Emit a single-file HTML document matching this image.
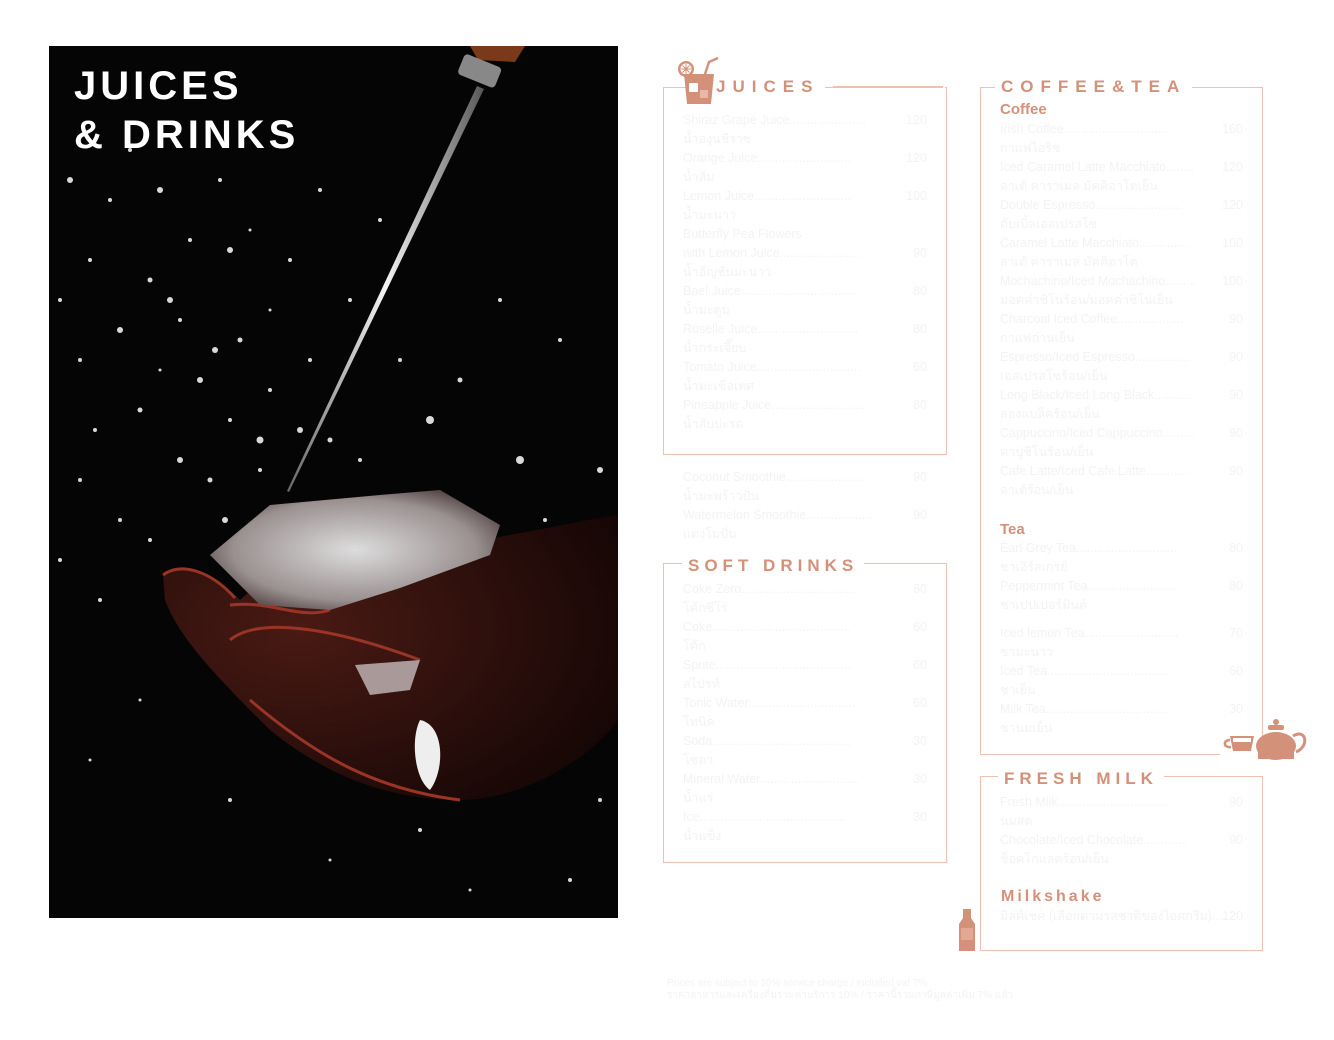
<!DOCTYPE html>
<html><head><meta charset="utf-8"><style>
*{margin:0;padding:0;box-sizing:border-box}
body{width:1334px;height:1040px;background:#fff;position:relative;overflow:hidden;font-family:"Liberation Sans","Noto Sans CJK SC",sans-serif}
.box{position:absolute;border:1.5px solid #ebc2b2}
.h{position:absolute;background:#fff;color:#d4917a;font-weight:bold;font-size:17px;letter-spacing:5px;padding:0 6px;line-height:20px}
.sub{position:absolute;color:#d4917a;font-weight:bold;font-size:15px}
.l{position:absolute;font-size:12.5px;color:#f3f3f3;line-height:19px;white-space:nowrap}
.p{position:absolute;font-size:12.5px;color:#f3f3f3;line-height:19px;text-align:right;width:40px}
</style></head><body>

<svg style="position:absolute;left:49px;top:46px" width="569" height="872" viewBox="49 46 569 872">
<defs>
<radialGradient id="ice" cx="0.5" cy="0.5" r="0.6"><stop offset="0" stop-color="#ddd"/><stop offset="0.7" stop-color="#9a9090"/><stop offset="1" stop-color="#4a3a3a"/></radialGradient>
<linearGradient id="pick" x1="0" y1="0" x2="1" y2="0"><stop offset="0" stop-color="#666"/><stop offset="0.5" stop-color="#f4f4f4"/><stop offset="1" stop-color="#555"/></linearGradient>
<radialGradient id="hand" cx="0.3" cy="0.4" r="0.8"><stop offset="0" stop-color="#4a1a14"/><stop offset="1" stop-color="#140605"/></radialGradient>
</defs>
<rect x="49" y="46" width="569" height="872" fill="#050505"/>
<g fill="#fff" opacity="0.85">
<circle cx="70" cy="180" r="3"/><circle cx="110" cy="200" r="2"/><circle cx="160" cy="190" r="3"/><circle cx="220" cy="180" r="2"/><circle cx="90" cy="260" r="2"/><circle cx="150" cy="280" r="2.5"/><circle cx="230" cy="250" r="3"/><circle cx="290" cy="260" r="2"/><circle cx="120" cy="330" r="3"/><circle cx="180" cy="320" r="2"/><circle cx="240" cy="340" r="2.5"/><circle cx="80" cy="360" r="2"/><circle cx="200" cy="380" r="3"/><circle cx="270" cy="390" r="2"/><circle cx="140" cy="410" r="2.5"/><circle cx="230" cy="420" r="2"/><circle cx="300" cy="430" r="3"/><circle cx="95" cy="430" r="2"/><circle cx="180" cy="460" r="3"/><circle cx="260" cy="470" r="2"/><circle cx="330" cy="440" r="2.5"/><circle cx="360" cy="460" r="2"/><circle cx="430" cy="420" r="4"/><circle cx="520" cy="460" r="4"/><circle cx="560" cy="340" r="2"/><circle cx="500" cy="300" r="2"/><circle cx="400" cy="360" r="2"/><circle cx="460" cy="380" r="2.5"/><circle cx="350" cy="300" r="2"/><circle cx="320" cy="190" r="2"/><circle cx="380" cy="220" r="2"/><circle cx="600" cy="470" r="3"/><circle cx="580" cy="560" r="3"/><circle cx="545" cy="520" r="2"/><circle cx="80" cy="480" r="2"/><circle cx="120" cy="520" r="2"/><circle cx="60" cy="560" r="2"/><circle cx="100" cy="600" r="2"/><circle cx="140" cy="700" r="1.5"/><circle cx="90" cy="760" r="1.5"/><circle cx="230" cy="800" r="2"/><circle cx="330" cy="860" r="1.5"/><circle cx="420" cy="830" r="2"/><circle cx="520" cy="760" r="2"/><circle cx="570" cy="880" r="2"/><circle cx="470" cy="890" r="1.5"/><circle cx="600" cy="720" r="2"/><circle cx="250" cy="230" r="1.5"/><circle cx="190" cy="240" r="2"/><circle cx="130" cy="150" r="2"/><circle cx="60" cy="300" r="2"/><circle cx="270" cy="310" r="1.5"/><circle cx="310" cy="360" r="2"/><circle cx="160" cy="370" r="1.5"/><circle cx="210" cy="480" r="2.5"/>
<circle cx="170" cy="300" r="3"/><circle cx="215" cy="350" r="3"/><circle cx="260" cy="440" r="3.5"/><circle cx="225" cy="520" r="3"/><circle cx="150" cy="540" r="2"/><circle cx="330" cy="520" r="3"/><circle cx="520" cy="680" r="3"/><circle cx="560" cy="640" r="2"/><circle cx="480" cy="560" r="3"/><circle cx="600" cy="800" r="2"/><circle cx="250" cy="560" r="2"/></g>
<path d="M163 575 C180 560 215 575 240 600 C270 570 330 555 420 548 C500 540 580 520 618 515 L618 720 C590 760 520 800 460 800 C380 800 320 770 270 730 C220 680 180 640 165 600 Z" fill="url(#hand)"/>
<path d="M163 575 C180 562 210 570 235 598 M230 640 C260 615 340 630 420 660 M230 605 C270 600 300 620 330 610 M250 700 C320 760 380 790 460 800" stroke="#9a3424" stroke-width="3" fill="none"/>
<path d="M210 555 L270 505 L380 495 L440 490 L500 525 L490 555 L400 588 L330 610 L260 605 Z" fill="url(#ice)"/>
<path d="M355 665 L420 660 L410 690 L370 695 Z" fill="#a99"/>
<path d="M420 720 C445 725 445 770 430 790 C415 780 410 740 420 720 Z" fill="#eee"/>
<path d="M470 46 L525 46 L515 62 L478 60 Z" fill="#7a3a1a"/>
<rect x="460" y="60" width="40" height="22" rx="4" fill="#888" transform="rotate(22 480 70)"/>
<path d="M477 86 L484 89 L289 492 L287 491 Z" fill="url(#pick)"/>
<text x="74" y="99" fill="#fff" font-family="Liberation Sans,sans-serif" font-weight="bold" font-size="40" letter-spacing="4">JUICES</text>
<text x="74" y="148" fill="#fff" font-family="Liberation Sans,sans-serif" font-weight="bold" font-size="40" letter-spacing="4">&amp; DRINKS</text>
</svg>

<!-- JUICES -->
<div class="box" style="left:663px;top:87px;width:284px;height:368px"></div>
<div class="h" style="left:710px;top:77px;letter-spacing:7px">JUICES</div>
<div style="position:absolute;left:833px;top:84px;width:112px;height:6px;background:#fff"></div>
<div style="position:absolute;left:833px;top:86px;width:110px;height:1.5px;background:#ebc2b2"></div>
<svg style="position:absolute;left:676px;top:57px" width="44" height="50" viewBox="0 0 44 50">
<circle cx="10" cy="12" r="8" fill="#d4917a"/><circle cx="10" cy="12" r="5.5" fill="#fff"/><path d="M10 7v10M5 12h10M6.5 8.5l7 7M13.5 8.5l-7 7" stroke="#d4917a" stroke-width="1"/>
<path d="M8 17 H38 L35 47 H11 Z" fill="#d4917a"/><rect x="13" y="26" width="9" height="9" rx="1" fill="#fff"/><rect x="24" y="33" width="8" height="8" fill="#e8b9a8"/>
<path d="M28 20 L33 5 L42 1" stroke="#d4917a" stroke-width="2.5" fill="none"/>
</svg>
<div class="l" style="left:683px;top:111px">Shiraz Grape Juice......................<br>น้ำองุ่นชีราซ<br>Orange Juice...........................<br>น้ำส้ม<br>Lemon Juice............................<br>น้ำมะนาว<br>Butterfly Pea Flowers<br>with Lemon Juice.......................<br>น้ำอัญชันมะนาว<br>Bael Juice.................................<br>น้ำมะตูม<br>Roselle Juice.............................<br>น้ำกระเจี๊ยบ<br>Tomato Juice..............................<br>น้ำมะเขือเทศ<br>Pineapple Juice...........................<br>น้ำสับปะรด</div>
<div class="p" style="left:887px;top:111px">120</div><div class="p" style="left:887px;top:149px">120</div><div class="p" style="left:887px;top:187px">100</div><div class="p" style="left:887px;top:244px">90</div><div class="p" style="left:887px;top:282px">80</div><div class="p" style="left:887px;top:320px">80</div><div class="p" style="left:887px;top:358px">60</div><div class="p" style="left:887px;top:396px">80</div>
<div class="l" style="left:683px;top:468px">Coconut Smoothie.......................<br>น้ำมะพร้าวปั่น<br>Watermelon Smoothie...................<br>แตงโมปั่น</div>
<div class="p" style="left:887px;top:468px">90</div><div class="p" style="left:887px;top:506px">90</div>

<!-- SOFT DRINKS -->
<div class="box" style="left:663px;top:563px;width:284px;height:300px"></div>
<div class="h" style="left:682px;top:556px">SOFT DRINKS</div>
<div class="l" style="left:683px;top:580px">Coke Zero.................................<br>โค้กซีโร่<br>Coke........................................<br>โค้ก<br>Sprite.......................................<br>สไปรท์<br>Tonic Water...............................<br>โทนิค<br>Soda........................................<br>โซดา<br>Mineral Water.............................<br>น้ำแร่<br>Ice..........................................<br>น้ำแข็ง</div>
<div class="p" style="left:887px;top:580px">60</div><div class="p" style="left:887px;top:618px">60</div><div class="p" style="left:887px;top:656px">60</div><div class="p" style="left:887px;top:694px">60</div><div class="p" style="left:887px;top:732px">30</div><div class="p" style="left:887px;top:770px">30</div><div class="p" style="left:887px;top:808px">30</div>

<!-- COFFEE & TEA -->
<div class="box" style="left:980px;top:87px;width:283px;height:668px"></div>
<div class="h" style="left:995px;top:77px;letter-spacing:7px">COFFEE&amp;TEA</div>
<div class="sub" style="left:1000px;top:101px">Coffee</div>
<div class="l" style="left:1000px;top:120px">Irish Coffee..............................<br>กาแฟไอริช<br>Iced Caramel Latte Macchiato........<br>ลาเต้ คาราเมล มัคคิอาโตเย็น<br>Double Espresso.........................<br>ดับเบิ้ลเอสเปรสโซ<br>Caramel Latte Macchiato..............<br>ลาเต้ คาราเมล มัคคิอาโต<br>Mochachino/Iced Mochachino.........<br>มอคค่าชิโน่ร้อน/มอคค่าชิโน่เย็น<br>Charcoal Iced Coffee...................<br>กาแฟถ่านเย็น<br>Espresso/Iced Espresso................<br>เอสเปรสโซร้อน/เย็น<br>Long Black/Iced Long Black...........<br>ลองแบล็คร้อน/เย็น<br>Cappuccino/Iced Cappuccino.........<br>คาปูชิโน่ร้อน/เย็น<br>Cafe Latte/Iced Cafe Latte............<br>ลาเต้ร้อน/เย็น</div>
<div class="p" style="left:1203px;top:120px">160</div><div class="p" style="left:1203px;top:158px">120</div><div class="p" style="left:1203px;top:196px">120</div><div class="p" style="left:1203px;top:234px">100</div><div class="p" style="left:1203px;top:272px">100</div><div class="p" style="left:1203px;top:310px">90</div><div class="p" style="left:1203px;top:348px">90</div><div class="p" style="left:1203px;top:386px">90</div><div class="p" style="left:1203px;top:424px">90</div><div class="p" style="left:1203px;top:462px">90</div>
<div class="sub" style="left:1000px;top:521px">Tea</div>
<div class="l" style="left:1000px;top:539px">Earl Grey Tea.............................<br>ชาเอิร์ลเกรย์<br>Peppermint Tea..........................<br>ชาเปปเปอร์มินต์</div>
<div class="p" style="left:1203px;top:539px">80</div><div class="p" style="left:1203px;top:577px">80</div>
<div class="l" style="left:1000px;top:624px">Iced lemon Tea...........................<br>ชามะนาว<br>Iced Tea...................................<br>ชาเย็น<br>Milk Tea...................................<br>ชานมเย็น</div>
<div class="p" style="left:1203px;top:624px">70</div><div class="p" style="left:1203px;top:662px">60</div><div class="p" style="left:1203px;top:700px">30</div>
<svg style="position:absolute;left:1220px;top:714px" width="88" height="48" viewBox="0 0 88 48">
<rect x="0" y="36" width="88" height="12" fill="#fff"/>
<path d="M10 22 H34 L31 37 H13 Z" fill="#d4917a"/><rect x="13" y="24" width="18" height="4" fill="#fff"/><path d="M10 26 C3 26 3 34 11 33" stroke="#d4917a" stroke-width="2.5" fill="none"/>
<ellipse cx="56" cy="32" rx="20" ry="14" fill="#d4917a"/><rect x="38" y="30" width="36" height="15" fill="#d4917a"/><rect x="48" y="11" width="16" height="5" rx="2" fill="#d4917a"/><circle cx="56" cy="8" r="3" fill="#d4917a"/>
<path d="M73 22 C86 14 90 32 76 38" stroke="#d4917a" stroke-width="3" fill="none"/>
</svg>

<!-- FRESH MILK -->
<div class="box" style="left:980px;top:776px;width:283px;height:175px"></div>
<div class="h" style="left:998px;top:769px">FRESH MILK</div>
<div class="l" style="left:1000px;top:793px">Fresh Milk................................<br>นมสด<br>Chocolate/Iced Chocolate.............<br>ช็อคโกแลตร้อน/เย็น</div>
<div class="p" style="left:1203px;top:793px">90</div><div class="p" style="left:1203px;top:831px">90</div>
<div class="sub" style="left:1001px;top:888px;font-size:16px;letter-spacing:3px">Milkshake</div>
<div class="l" style="left:1000px;top:907px">มิลค์เชค (เลือกตามรสชาติของไอศกรีม).....</div>
<div class="p" style="left:1203px;top:907px">120</div>
<svg style="position:absolute;left:957px;top:908px" width="20" height="44" viewBox="0 0 20 44"><rect x="6" y="1" width="8" height="4" fill="#d4917a"/><path d="M6 5 H14 V10 L18 16 V43 H2 V16 L6 10 Z" fill="#d4917a"/><rect x="4" y="20" width="12" height="12" fill="#e3a893"/></svg>

<div class="l" style="left:667px;top:978px;font-size:10px;line-height:12px">Prices are subject to 10% service charge / included vat 7%<br>ราคาอาหารและเครื่องดื่มรวมค่าบริการ 10% / ราคานี้รวมภาษีมูลค่าเพิ่ม 7% แล้ว</div>
</body></html>
